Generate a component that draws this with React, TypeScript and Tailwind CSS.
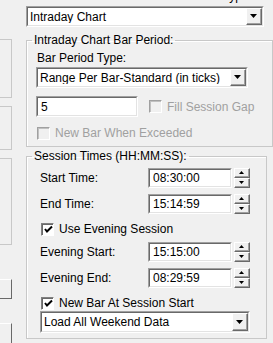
import React from 'react';

const font = { fontFamily: '"Liberation Sans", Arial, sans-serif' };

const Sunken: React.FC<{ className?: string; children?: React.ReactNode }> = ({ className = '', children }) => (
  <div className={`border-t border-l border-t-[#a0a0a0] border-l-[#a0a0a0] border-b border-r border-b-white border-r-white ${className}`}>
    <div className="h-full w-full border-t border-l border-t-[#696969] border-l-[#696969] border-b border-r border-b-[#e3e3e3] border-r-[#e3e3e3] bg-white">
      {children}
    </div>
  </div>
);

const Raised: React.FC<{ className?: string; children?: React.ReactNode }> = ({ className = '', children }) => (
  <div className={`border-t border-l border-t-white border-l-white border-b border-r border-b-[#696969] border-r-[#696969] bg-[#f0f0f0] ${className}`}>
    <div className="h-full w-full flex items-center justify-center border-b border-r border-b-[#a0a0a0] border-r-[#a0a0a0]">
      {children}
    </div>
  </div>
);

const Arrow = () => (
  <svg width="7" height="4" viewBox="0 0 7 4"><path d="M0 0h7L3.5 4z" fill="#000" /></svg>
);

const Combo: React.FC<{ text: string; className?: string }> = ({ text, className = '' }) => (
  <Sunken className={className}>
    <div className="flex h-full items-center">
      <span className="flex-1 pl-[2px] text-[12px] leading-none text-black whitespace-nowrap overflow-hidden">{text}</span>
      <Raised className="w-[16px] h-full">
        <Arrow />
      </Raised>
    </div>
  </Sunken>
);

const Check: React.FC<{ checked?: boolean; disabled?: boolean; label: string }> = ({ checked, disabled, label }) => (
  <div className="flex items-center gap-[5px] h-[14px] whitespace-nowrap">
    <div className={`shrink-0 w-[13px] h-[13px] border-t border-l border-b border-r ${disabled ? 'border-t-[#a0a0a0] border-l-[#a0a0a0] border-b-white border-r-white' : 'border-t-[#808080] border-l-[#808080] border-b-white border-r-white'}`}>
      <div className={`w-full h-full border-t border-l ${disabled ? 'bg-[#f0f0f0] border-t-[#c0c0c0] border-l-[#c0c0c0]' : 'bg-white border-t-[#696969] border-l-[#696969]'} flex items-center justify-center`}>
        {checked && (
          <svg width="9" height="9" viewBox="0 0 9 9"><path d="M1 4l2 2.5L8 1.5" stroke="#000" strokeWidth="2" fill="none" /></svg>
        )}
      </div>
    </div>
    <span className={`text-[12px] leading-none ${disabled ? 'text-[#a0a0a0]' : 'text-black'}`}>{label}</span>
  </div>
);

const Spin: React.FC<{ label: string; value: string }> = ({ label, value }) => (
  <div className="flex items-center h-[20px]">
    <span className="w-[108px] text-[12px] leading-none text-black">{label}</span>
    <Sunken className="w-[84px] h-[20px]">
      <div className="h-full flex items-center pl-[3px] text-[12px] leading-none text-black">{value}</div>
    </Sunken>
    <div className="ml-[2px] w-[16px] h-[20px] flex flex-col">
      <Raised className="h-[10px] w-full">
        <svg width="5" height="3" viewBox="0 0 5 3"><path d="M2.5 0L5 3H0z" fill="#000" /></svg>
      </Raised>
      <Raised className="h-[10px] w-full">
        <svg width="5" height="3" viewBox="0 0 5 3"><path d="M0 0h5L2.5 3z" fill="#000" /></svg>
      </Raised>
    </div>
  </div>
);

const Group: React.FC<{ title: string; className?: string; bodyClass?: string; children: React.ReactNode }> = ({ title, className = '', bodyClass = '', children }) => (
  <fieldset className={`border border-[#c8c8c8] shadow-[inset_1px_1px_0_#fff] ${className}`}>
    <legend className="ml-[5px] px-[2px] text-[12px] leading-[15px] text-black">{title}</legend>
    <div className={bodyClass}>{children}</div>
  </fieldset>
);

export default function App() {
  return (
    <div className="w-[273px] h-[343px] overflow-hidden bg-[#f0f0f0] flex" style={font}>
      {/* cut-off left column */}
      <div className="w-[12px] flex flex-col shrink-0">
        <div className="mt-[39px] h-[63px] border-t border-r border-b border-[#c8c8c8]" />
        <div className="mt-[8px] h-[46px] border-t border-r border-b border-[#c8c8c8]" />
        <div className="mt-[8px] h-[93px] border-t border-r border-b border-[#c8c8c8]" />
        <div className="mt-[34px] h-[21px] border-t border-t-white border-r border-b border-r-[#696969] border-b-[#696969]" />
        <div className="mt-[24px] h-[21px] border-t border-t-white border-r border-r-[#696969]" />
      </div>

      {/* main column */}
      <div className="ml-[14px] w-[241px] flex flex-col">
        {/* label scrolled mostly out of view: only descenders show */}
        <div className="h-[3px] overflow-hidden flex justify-end pr-[15px]">
          <span className="-mt-[10px] text-[12px] leading-none text-black whitespace-nowrap">Chart Data Type:</span>
        </div>
        <Combo text="Intraday Chart" className="mt-[3px] w-[238px] h-[21px]" />

        <Group title="Intraday Chart Bar Period:" className="mt-[6px] h-[114px]" bodyClass="pl-[9px] pr-[18px]">
          <div className="mt-[3px] text-[12px] leading-[15px] text-black pl-[1px]">Bar Period Type:</div>
          <Combo text="Range Per Bar-Standard (in ticks)" className="mt-[1px] w-[212px] h-[21px]" />
          <div className="mt-[8px] flex items-center h-[21px]">
            <Sunken className="w-[102px] h-[21px] shrink-0">
              <div className="h-full flex items-center pl-[3px] text-[12px] leading-none text-black">5</div>
            </Sunken>
            <div className="ml-[11px]">
              <Check disabled label="Fill Session Gap" />
            </div>
          </div>
          <div className="mt-[9px] pl-[1px]">
            <Check disabled label="New Bar When Exceeded" />
          </div>
        </Group>

        <Group title="Session Times (HH:MM:SS):" className="mt-[2px] h-[190px]" bodyClass="pl-[13px] pr-[14px]">
          <div className="mt-[4px]">
            <Spin label="Start Time:" value="08:30:00" />
          </div>
          <div className="mt-[6px]">
            <Spin label="End Time:" value="15:14:59" />
          </div>
          <div className="mt-[8px] pl-[1px]">
            <Check checked label="Use Evening Session" />
          </div>
          <div className="mt-[6px]">
            <Spin label="Evening Start:" value="15:15:00" />
          </div>
          <div className="mt-[6px]">
            <Spin label="Evening End:" value="08:29:59" />
          </div>
          <div className="mt-[8px] pl-[1px]">
            <Check checked label="New Bar At Session Start" />
          </div>
          <Combo text="Load All Weekend Data" className="mt-[1px] w-[210px] h-[22px]" />
        </Group>
      </div>
    </div>
  );
}
